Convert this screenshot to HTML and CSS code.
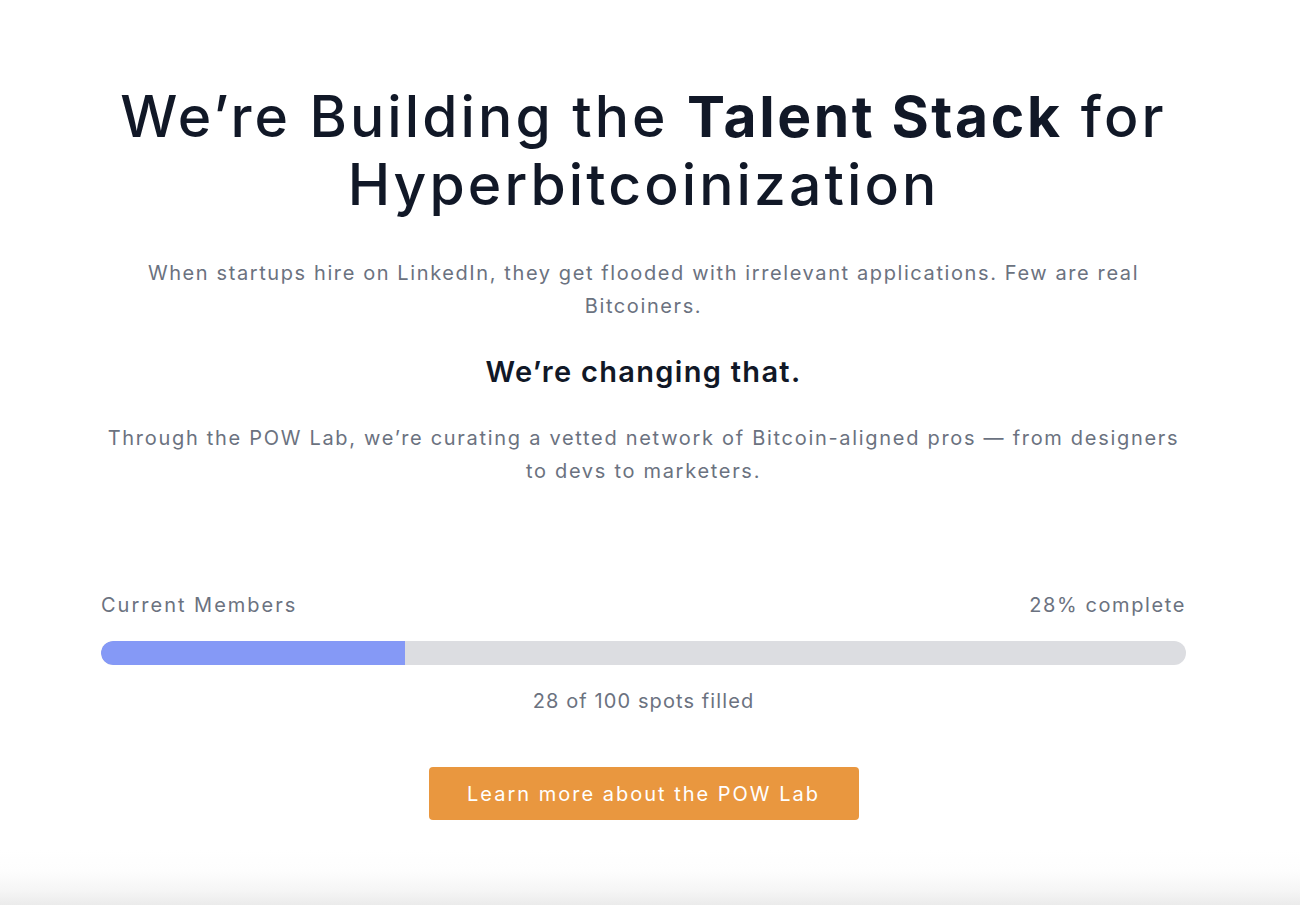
FILE: index.html
```html
<!DOCTYPE html>
<html lang="en">
<head>
<meta charset="utf-8">
<title>POW Lab</title>
<link rel="stylesheet" href="styles.css">
</head>
<body>
<div class="page">
  <main class="hero">
    <h1 class="title">We’re Building the <strong>Talent Stack</strong> for<br>Hyperbitcoinization</h1>
    <p class="lead">When startups hire on LinkedIn, they get flooded with irrelevant applications. Few are real Bitcoiners.</p>
    <h2 class="sub">We’re changing that.</h2>
    <p class="lead wide">Through the POW Lab, we’re curating a vetted network of Bitcoin-aligned pros — from designers to devs to marketers.</p>

    <section class="progress">
      <div class="progress-head">
        <span>Current Members</span>
        <span class="pct">28% complete</span>
      </div>
      <div class="track"><div class="fill" style="width:28%"></div></div>
      <div class="count">28 of 100 spots filled</div>
    </section>

    <a class="cta" href="#">Learn more about the POW Lab</a>
  </main>
  <div class="fade"></div>
</div>
</body>
</html>
```

FILE: styles.css
```css
* { box-sizing: border-box; }
html, body { margin: 0; padding: 0; background: #ffffff; }
body {
  font-family: "Inter", "Liberation Sans", sans-serif;
  color: #111827;
}
.page {
  padding-right: 13px;
  display: flex;
  flex-direction: column;
}
.hero {
  width: 1085px;
  margin: 0 auto;
  padding-top: 83px;
  display: flex;
  flex-direction: column;
  align-items: center;
  text-align: center;
}
.title {
  margin: 0;
  font-size: 57px;
  line-height: 68px;
  font-weight: 500;
  letter-spacing: 3.1px;
  color: #111827;
}
.title strong { font-weight: 700; letter-spacing: 2.6px; }
.lead {
  margin: 38px 0 0;
  max-width: 1010px;
  font-size: 20px;
  line-height: 33px;
  color: #6b7280;
  letter-spacing: 1.6px;
}
.lead.wide { max-width: 1085px; margin-top: 32px; letter-spacing: 1.7px; }
.sub {
  margin: 31px 0 0;
  font-size: 29px;
  line-height: 36px;
  font-weight: 600;
  color: #111827;
  letter-spacing: 1.3px;
}
.progress {
  width: 100%;
  margin-top: 103px;
  display: flex;
  flex-direction: column;
}
.progress-head {
  display: flex;
  justify-content: space-between;
  font-size: 20px;
  line-height: 28px;
  color: #6b7280;
  letter-spacing: 2px;
}
.progress-head .pct { letter-spacing: 1.6px; }
.track {
  margin-top: 22px;
  height: 24px;
  border-radius: 12px;
  background: #dcdde1;
  overflow: hidden;
}
.fill {
  height: 100%;
  background: #8599f6;
  border-radius: 12px 0 0 12px;
}
.count {
  margin-top: 22px;
  font-size: 20px;
  line-height: 28px;
  color: #6b7280;
  letter-spacing: 1.1px;
}
.cta {
  margin-top: 52px;
  width: 430px;
  height: 53px;
  display: flex;
  align-items: center;
  justify-content: center;
  background: #e9973f;
  color: #ffffff;
  border-radius: 4px;
  font-size: 20px;
  letter-spacing: 2px;
  text-decoration: none;
}
.fade {
  margin-top: 30px;
  height: 55px;
  margin-right: -13px;
  background: linear-gradient(to bottom, #ffffff 0%, #fdfdfd 40%, #f5f5f5 75%, #ebebeb 100%);
}
```
